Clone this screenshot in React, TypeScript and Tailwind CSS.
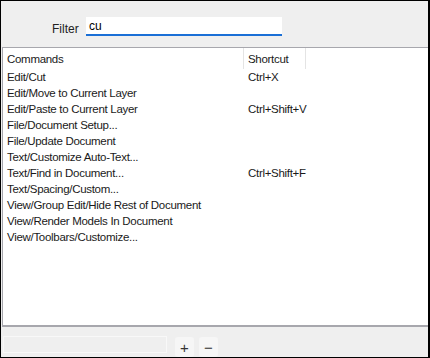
import React from 'react'

const rows: [string, string][] = [
  ['Edit/Cut', 'Ctrl+X'],
  ['Edit/Move to Current Layer', ''],
  ['Edit/Paste to Current Layer', 'Ctrl+Shift+V'],
  ['File/Document Setup...', ''],
  ['File/Update Document', ''],
  ['Text/Customize Auto-Text...', ''],
  ['Text/Find in Document...', 'Ctrl+Shift+F'],
  ['Text/Spacing/Custom...', ''],
  ['View/Group Edit/Hide Rest of Document', ''],
  ['View/Render Models In Document', ''],
  ['View/Toolbars/Customize...', ''],
]

export default function App() {
  return (
    <div
      className="w-[430px] h-[358px] overflow-hidden bg-[#efefef] border-t border-l border-b border-r-2 border-black flex flex-col text-[11.5px] text-[#1a1a1a]"
      style={{ fontFamily: '"Liberation Sans", Arial, sans-serif' }}
    >
      <div className="h-[46px] flex items-start pt-[16px] pl-[51px]">
        <span className="mt-[3px] w-[34px] text-[#222] text-[12px]">Filter</span>
        <div className="w-[196px] h-[19px] bg-white border-b-2 border-[#1a6fd6] flex items-center pl-[3px] text-black text-[12px]">
          cu
        </div>
      </div>

      <div className="ml-[1px] h-[282px] bg-white border-t border-l border-b-2 border-[#a7a7ad] flex flex-col tracking-[-0.3px]">
        <div className="flex h-[21px] items-stretch">
          <div className="w-[240px] pl-[4px] flex items-end pb-[1px]">Commands</div>
          <div className="w-[63px] border-l border-r border-[#e4e4e4] pl-[4px] flex items-end pb-[1px]">Shortcut</div>
        </div>
        <div className="flex flex-col">
          {rows.map(([cmd, key]) => (
            <div key={cmd} className="flex h-[16px] leading-[16px] items-center">
              <div className="w-[240px] pl-[4px] whitespace-nowrap">{cmd}</div>
              <div className="pl-[5px] whitespace-nowrap">{key}</div>
            </div>
          ))}
        </div>
      </div>

      <div className="flex items-start pt-[9px] pl-[2px] gap-[8px]">
        <div className="w-[164px] h-[17px] border border-[#f8f8f8]" />
        <div className="flex gap-[5px] mt-[1px]">
          <div className="w-[19px] h-[20px] rounded-[3px] bg-[#f6f6f6] flex items-center justify-center text-[#333] text-[15px] leading-none">+</div>
          <div className="w-[19px] h-[20px] rounded-[3px] bg-[#f6f6f6] flex items-center justify-center text-[#333] text-[15px] leading-none">−</div>
        </div>
      </div>
    </div>
  )
}
